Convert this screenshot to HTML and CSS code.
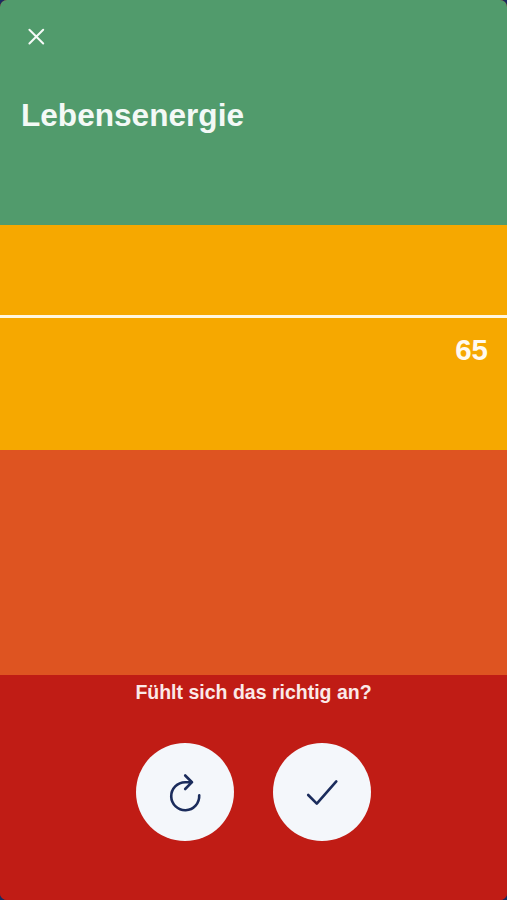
FILE: index.html
```html
<!DOCTYPE html>
<html lang="de">
<head>
<meta charset="utf-8">
<title>Lebensenergie</title>
<link rel="stylesheet" href="styles.css">
</head>
<body>
<main class="screen">
  <section class="band band-green">
    <button class="close" aria-label="Schließen">
      <svg width="18" height="18" viewBox="0 0 18 18"><path d="M2.4 2.7L16.2 16.5M16.2 2.7L2.4 16.5"/></svg>
    </button>
    <h1 class="title">Lebensenergie</h1>
  </section>
  <section class="band band-yellow">
    <div class="level"></div>
    <div class="value">65</div>
  </section>
  <section class="band band-orange"></section>
  <section class="band band-red">
    <p class="question">Fühlt sich das richtig an?</p>
    <div class="actions">
      <button class="action" aria-label="Wiederholen">
        <svg width="98" height="98" viewBox="0 0 98 98"><path d="M63.2 52.4A14 14 0 1 1 49.2 39.2H56M49.2 32.5L56 39.2L49.2 46"/></svg>
      </button>
      <button class="action" aria-label="Bestätigen">
        <svg width="98" height="98" viewBox="0 0 98 98"><path d="M35.2 52L43.8 60.6L63.3 38.4"/></svg>
      </button>
    </div>
  </section>
</main>
</body>
</html>
```
FILE: styles.css
```css
* { box-sizing: border-box; }
body {
  margin: 0;
  background: #182c60;
  font-family: "Liberation Sans", Arial, sans-serif;
  font-weight: 700;
}
.screen {
  width: 507px;
  height: 900px;
  display: grid;
  grid-template-rows: repeat(4, 225px);
  border-radius: 7px;
  overflow: hidden;
  background: #c01c15;
}
.band { overflow: hidden; }
.band-green { background: #519b6c; padding: 27px 21px 0; }
.band-yellow { background: #f6a800; }
.band-orange { background: #de5421; }
.band-red { background: #c01c15; }
button { border: 0; padding: 0; display: block; }
svg { display: block; fill: none; stroke-linecap: round; stroke-linejoin: round; }
.close { margin-left: 6px; width: 18px; height: 18px; background: none; }
.close svg { stroke: #f5faf7; stroke-width: 2; }
.title { margin: 51px 0 0; font-size: 31.6px; line-height: 38px; color: #f3f9f6; }
.level { height: 3px; margin-top: 89.5px; background: #fff6e0; }
.value {
  padding-right: 19px;
  margin-top: 14.5px;
  text-align: right;
  font-size: 29.5px;
  line-height: 36px;
  color: #fffaf0;
}
.question {
  margin: 6px 0 0;
  text-align: center;
  font-size: 19.5px;
  line-height: 22px;
  color: #fbe9e8;
}
.actions { display: flex; justify-content: center; gap: 39px; margin-top: 40.4px; }
.action { width: 98px; height: 98px; border-radius: 50%; background: #f4f7fb; }
.action svg { stroke: #1b2c5c; stroke-width: 2.6; }
```
